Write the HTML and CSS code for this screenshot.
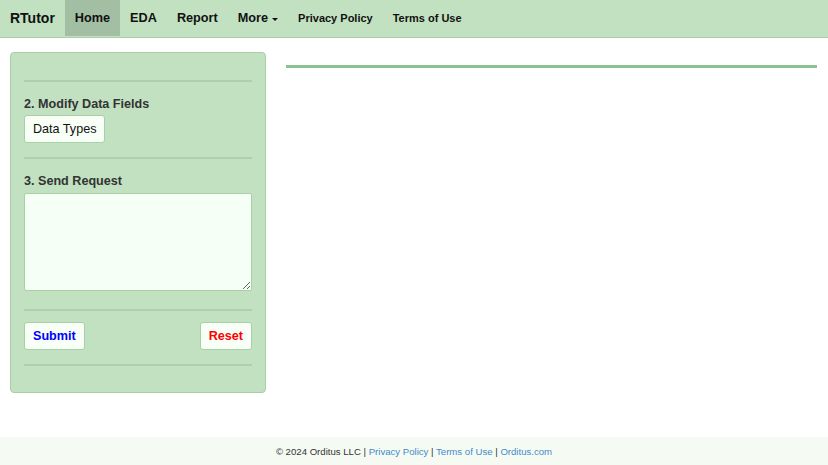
FILE: index.html
```html
<!DOCTYPE html>
<html lang="en">
<head>
  <meta charset="UTF-8">
  <title>RTutor</title>
  <link rel="stylesheet" href="styles.css">
</head>
<body>
  <nav class="navbar">
    <span class="brand">RTutor</span>
    <a class="nav-item active" href="#">Home</a>
    <a class="nav-item" href="#">EDA</a>
    <a class="nav-item" href="#">Report</a>
    <a class="nav-item" href="#">More <span class="caret"></span></a>
    <a class="nav-item small" href="#">Privacy Policy</a>
    <a class="nav-item small" href="#">Terms of Use</a>
  </nav>

  <div class="page">
    <aside class="well">
      <hr class="first">
      <h4>2. Modify Data Fields</h4>
      <button class="btn">Data Types</button>
      <hr>
      <h4>3. Send Request</h4>
      <textarea class="request"></textarea>
      <hr class="tight">
      <div class="actions">
        <button class="btn submit">Submit</button>
        <button class="btn reset">Reset</button>
      </div>
      <hr>
    </aside>

    <main class="content">
      <hr class="main-rule">
    </main>
  </div>

  <footer class="footer">
    <p>© 2024 Orditus LLC | <a href="#">Privacy Policy</a> | <a href="#">Terms of Use</a> | <a href="#">Orditus.com</a></p>
  </footer>
</body>
</html>
```

FILE: styles.css
```css
body {
  margin: 0;
  font-family: "Liberation Sans", Arial, sans-serif;
  font-size: 12.5px;
  color: #333;
  background: #fff;
  height: 465px;
  display: flex;
  flex-direction: column;
}
.navbar {
  display: flex;
  align-items: stretch;
  height: 36px;
  background: #c1e1c1;
  border-bottom: 1px solid #a9cda9;
  padding-bottom: 1px;
}
.brand {
  display: flex;
  align-items: center;
  padding: 0 10px;
  font-size: 14px;
  font-weight: bold;
  color: #111;
}
.nav-item {
  display: flex;
  align-items: center;
  padding: 0 10px;
  font-size: 12.7px;
  font-weight: bold;
  color: #111;
  text-decoration: none;
}
.nav-item.small {
  font-size: 11px;
}
.nav-item.active {
  background: #a3bfa3;
}
.caret {
  display: inline-block;
  margin-left: 4px;
  margin-top: 2px;
  border-top: 3px solid #111;
  border-left: 3px solid transparent;
  border-right: 3px solid transparent;
}
.page {
  flex: 1;
  display: flex;
  align-items: flex-start;
  gap: 20px;
  padding: 14px 11px 0 10px;
}
.well {
  width: 228px;
  flex: none;
  padding: 14px 13px 13px;
  background: #c1e1c1;
  border: 1px solid #a8cfa8;
  border-radius: 4px;
}
.well hr {
  border: 0;
  border-top: 2px solid #abd0ab;
  margin: 14px 0 15px;
}
.well hr.first {
  margin-top: 13px;
}
.well hr.tight {
  margin: 18px 0 11px;
}
.well hr:last-child {
  margin-bottom: 13px;
}
h4 {
  margin: 0 0 3px;
  font-size: 12.6px;
  line-height: 15px;
  font-weight: bold;
  color: #333;
}
.btn {
  font-family: inherit;
  font-size: 12.6px;
  line-height: 16px;
  padding: 5px 8px;
  background: #f7fff7;
  border: 1px solid #a8cfa8;
  border-radius: 3px;
  color: #111;
}
.request {
  display: block;
  box-sizing: border-box;
  width: 100%;
  height: 98px;
  margin-top: 4px;
  background: #f5fff5;
  border: 1px solid #a8cfa8;
  border-radius: 2px;
}
.actions {
  display: flex;
  justify-content: space-between;
}
.submit {
  color: #0000ff;
  font-weight: bold;
  padding: 5px 8px;
}
.reset {
  color: #ff0000;
  font-weight: bold;
  padding: 5px 8px;
}
.content {
  flex: 1;
}
.main-rule {
  border: 0;
  border-top: 3px solid #8fc08f;
  margin: 13px 0 0;
}
.footer {
  height: 28px;
  display: flex;
  align-items: center;
  justify-content: center;
  background: #f5fbf3;
  font-size: 9.6px;
  color: #333;
}
.footer p {
  margin: 0;
}
.footer a {
  color: #428bca;
  text-decoration: none;
}
```
